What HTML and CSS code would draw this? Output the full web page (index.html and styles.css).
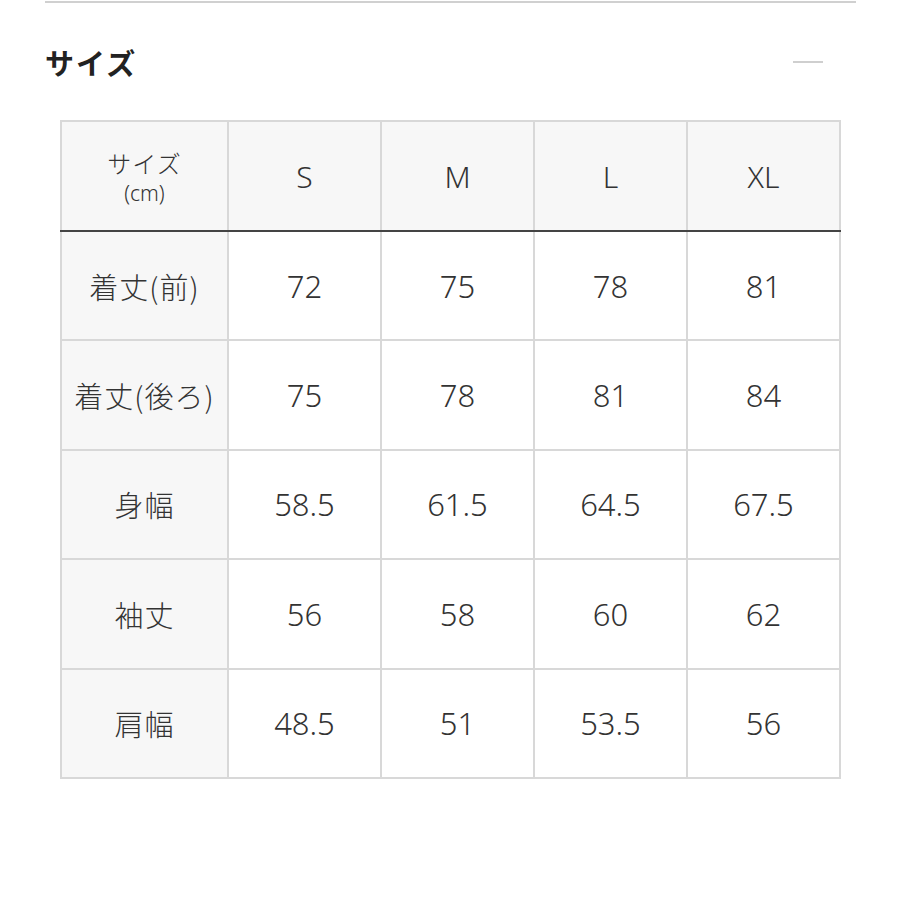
FILE: index.html
```html
<!DOCTYPE html>
<html lang="ja">
<head>
<meta charset="utf-8">
<link rel="stylesheet" href="styles.css">
</head>
<body>
<div class="page">
  <div class="topline"></div>
  <div class="section-head">
    <h2 class="title">サイズ</h2>
    <span class="minus"></span>
  </div>
  <table class="size-table">
    <colgroup>
      <col class="c-label"><col class="c-val"><col class="c-val"><col class="c-val"><col class="c-val">
    </colgroup>
    <thead>
      <tr>
        <th class="label head-label"><span class="hl-main">サイズ</span><span class="hl-sub">(cm)</span></th>
        <th>S</th><th>M</th><th>L</th><th>XL</th>
      </tr>
    </thead>
    <tbody>
      <tr><th class="label">着丈(前)</th><td>72</td><td>75</td><td>78</td><td>81</td></tr>
      <tr><th class="label">着丈(後ろ)</th><td>75</td><td>78</td><td>81</td><td>84</td></tr>
      <tr><th class="label">身幅</th><td>58.5</td><td>61.5</td><td>64.5</td><td>67.5</td></tr>
      <tr><th class="label">袖丈</th><td>56</td><td>58</td><td>60</td><td>62</td></tr>
      <tr><th class="label">肩幅</th><td>48.5</td><td>51</td><td>53.5</td><td>56</td></tr>
    </tbody>
  </table>
</div>
</body>
</html>
```
FILE: styles.css
```css
html, body {
  margin: 0;
  padding: 0;
  background: #ffffff;
}
.page {
  width: 900px;
  height: 900px;
  font-family: "Noto Sans", "Noto Sans CJK JP", sans-serif;
  color: #333333;
}
.topline {
  margin: 1px 44px 0 45px;
  height: 2px;
  background: #d0d0d0;
}
.section-head {
  display: flex;
  align-items: center;
  justify-content: space-between;
  padding: 0 77px 0 45px;
  height: 118px;
  margin-top: 0;
}
.title {
  margin: 0;
  font-family: "Noto Sans CJK JP", sans-serif;
  font-weight: 700;
  font-size: 29px;
  color: #222222;
  letter-spacing: 2px;
}
.minus {
  display: block;
  width: 30px;
  height: 2px;
  background: #cfcfcf;
}
.size-table {
  margin-left: 60px;
  margin-top: -1px;
  width: 779px;
  border-collapse: collapse;
  table-layout: fixed;
}
.c-label { width: 167px; }
.c-val { width: 153px; }
.size-table th,
.size-table td {
  border: 2px solid #d8d8d8;
  text-align: center;
  vertical-align: middle;
  font-weight: 300;
  font-size: 31px;
  color: #333333;
  padding: 0;
  height: 107.4px;
}
.size-table thead th {
  background: #f7f7f7;
  border-bottom: 2px solid #444444;
  font-size: 30px;
  height: 108px;
}
.size-table th.label {
  background: #f7f7f7;
  font-family: "Noto Sans CJK JP", sans-serif;
  font-weight: 300;
  font-size: 29px;
  letter-spacing: 1px;
}
.size-table td {
  background: #ffffff;
}
.hl-main {
  display: block;
  font-size: 24px;
  line-height: 34px;
}
.hl-sub {
  display: block;
  font-size: 21px;
  line-height: 26px;
  font-family: "Noto Sans", sans-serif;
  font-weight: 300;
  letter-spacing: 0;
}
```
